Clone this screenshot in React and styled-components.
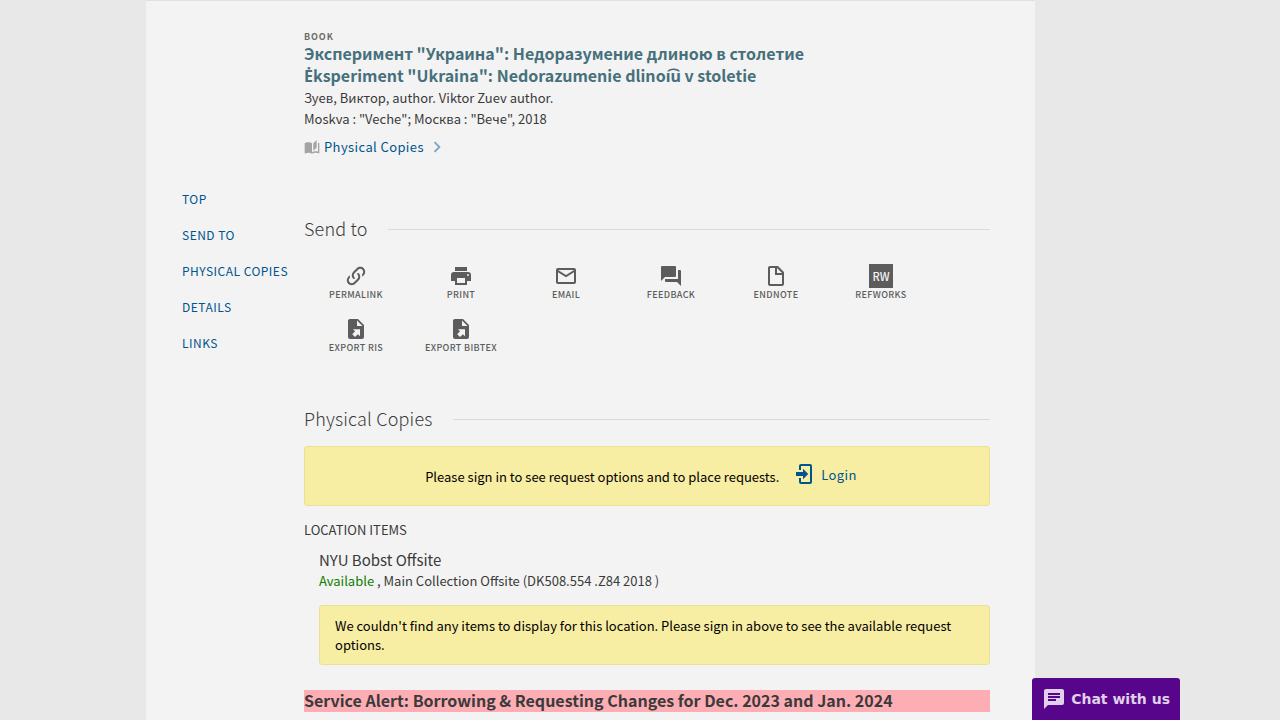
import React from "react";
import styled, { createGlobalStyle } from "styled-components";

const Global = createGlobalStyle`
  * { box-sizing: border-box; }
  body {
    margin: 0;
    background: #e8e8e8;
    color: #3a3a3a;
    font-family: "Source Sans Pro", "Noto Sans CJK SC", "Noto Sans", sans-serif;
    font-size: 13px;
    line-height: 21px;
  }
  a { color: #00558c; text-decoration: none; }
  h1, h2, h3, h4, p, ul { margin: 0; padding: 0; font-weight: 400; }
  ul { list-style: none; }
  button { font: inherit; border: 0; background: none; padding: 0; cursor: pointer; }
`;

const Page = styled.div`
  padding: 0 245px 0 146px;
  min-height: 100vh;
  display: flex;
`;

const Sheet = styled.div`
  flex: 1;
  display: flex;
  background: #f3f3f3;
  border-top: 1px solid #e0e0e0;
  padding: 31px 45px 8px 36px;
`;

const SideNav = styled.nav`
  flex: 0 0 122px;
  padding-top: 149px;
`;

const NavList = styled.ul`
  display: flex;
  flex-direction: column;
`;

const NavLink = styled.a`
  display: block;
  font-size: 12px;
  line-height: 36px;
  letter-spacing: 0.04em;
  text-transform: uppercase;
  white-space: nowrap;
`;

const Main = styled.main`
  flex: 1;
  min-width: 0;
`;

const Kind = styled.p`
  font-size: 9px;
  line-height: 10px;
  && { font-weight: 700; }
  letter-spacing: 0.1em;
  text-transform: uppercase;
  color: #6a6a6a;
`;

const Title = styled.h1`
  font-size: 16px;
  line-height: 22px;
  && { font-weight: 700; }
  margin-bottom: 1px;
  color: #46707c;
  a { color: inherit; }
`;

/* Latin letters with diacritics that the CJK family cannot compose */
const Accented = styled.span`
  font-family: "Noto Sans", sans-serif;
  line-height: 1;
`;

const Availability = styled.button`
  display: flex;
  align-items: center;
  gap: 2px;
  margin-top: 7px;
  color: #00558c;
  letter-spacing: 0.03em;
  line-height: 22px;
  svg:first-child { color: #a3a3a3; margin-right: 2px; }
  svg:last-child { color: #7ba5c0; }
`;

const SectionHead = styled.div`
  display: flex;
  align-items: center;
  gap: 20px;
  margin-top: ${(p) => p.$gap}px;
  &::after {
    content: "";
    flex: 1;
    height: 1px;
    background: #dadada;
  }
  h2 {
    padding-bottom: 2px;
    font-size: 18px;
    line-height: 26px;
    font-weight: 300;
    letter-spacing: 0.01em;
  }
`;

const Actions = styled.ul`
  display: flex;
  flex-wrap: wrap;
  margin-top: 21px;
  gap: 15px 1px;
`;

const ActionButton = styled.button`
  width: 104px;
  display: flex;
  flex-direction: column;
  align-items: center;
  color: #5c5c5c;
  font-size: 9px;
  line-height: 14px;
  font-weight: 500;
  letter-spacing: 0.04em;
  text-transform: uppercase;
  white-space: nowrap;
`;

const Tile = styled.span`
  width: 24px;
  height: 24px;
  background: #5c5c5c;
  color: #f3f3f3;
  line-height: 24px;
  text-align: center;
  font-size: 11px;
  letter-spacing: 0;
`;

const Notice = styled.div`
  background: #f7eda3;
  border: 1px solid #ece193;
  border-radius: 3px;
  color: #000;
`;

const SignIn = styled(Notice)`
  display: flex;
  align-items: center;
  justify-content: center;
  gap: 14px;
  height: 60px;
  margin-top: 13px;
  padding-right: 12px;
`;

const Login = styled.button`
  display: flex;
  align-items: center;
  gap: 4px;
  margin-bottom: 4px;
  color: #00558c;
  letter-spacing: 0.03em;
`;

const LocationLabel = styled.h3`
  margin-top: 13px;
  font-size: 13px;
`;

const Location = styled.section`
  padding-left: 15px;
  margin-top: 10px;
  h4 { font-size: 15px; line-height: 20px; }
`;

const Green = styled.span`
  color: #0f7d00;
`;

const Empty = styled(Notice)`
  margin-top: 14px;
  padding: 10px 15px;
  line-height: 19px;
`;

const ServiceAlert = styled.h2`
  margin-top: 25px;
  padding-bottom: 2px;
  background: #fdaeb4;
  font-size: 16px;
  line-height: 20px;
  && { font-weight: 700; }
`;

const Chat = styled.button`
  && {
    position: fixed;
    right: 100px;
    bottom: 0;
    display: flex;
    align-items: center;
    gap: 5px;
    height: 42px;
    padding: 0 10px;
    border-radius: 3px 3px 0 0;
    background: #57068c;
    color: #e0d0ea;
    font-family: "DejaVu Sans", sans-serif;
    font-weight: 700;
    font-size: 14px;
  }
`;

const paths = {
  link: "M10.59,13.41C11,13.8 11,14.44 10.59,14.83C10.2,15.22 9.56,15.22 9.17,14.83C7.22,12.88 7.22,9.71 9.17,7.76V7.76L12.71,4.22C14.66,2.27 17.83,2.27 19.78,4.22C21.73,6.17 21.73,9.34 19.78,11.29L18.29,12.78C18.3,11.96 18.17,11.14 17.89,10.36L18.36,9.88C19.54,8.71 19.54,6.81 18.36,5.64C17.19,4.46 15.29,4.46 14.12,5.64L10.59,9.17C9.41,10.34 9.41,12.24 10.59,13.41M13.41,9.17C13.8,8.78 14.44,8.78 14.83,9.17C16.78,11.12 16.78,14.29 14.83,16.24V16.24L11.29,19.78C9.34,21.73 6.17,21.73 4.22,19.78C2.27,17.83 2.27,14.66 4.22,12.71L5.71,11.22C5.7,12.04 5.83,12.86 6.11,13.65L5.64,14.12C4.46,15.29 4.46,17.19 5.64,18.36C6.81,19.54 8.71,19.54 9.88,18.36L13.41,14.83C14.59,13.66 14.59,11.76 13.41,10.59C13,10.2 13,9.56 13.41,9.17Z",
  print: "M18,3H6V7H18M19,12A1,1 0 0,1 18,11A1,1 0 0,1 19,10A1,1 0 0,1 20,11A1,1 0 0,1 19,12M16,19H8V14H16M19,8H5A3,3 0 0,0 2,11V17H6V21H18V17H22V11A3,3 0 0,0 19,8Z",
  mail: "M4,4H20A2,2 0 0,1 22,6V18A2,2 0 0,1 20,20H4C2.89,20 2,19.1 2,18V6C2,4.89 2.89,4 4,4M12,11L20,6H4L12,11M4,18H20V8.37L12,13.36L4,8.37V18Z",
  forum: "M17,12V3A1,1 0 0,0 16,2H3A1,1 0 0,0 2,3V17L6,13H16A1,1 0 0,0 17,12M21,6H19V15H6V17A1,1 0 0,0 7,18H18L22,22V7A1,1 0 0,0 21,6Z",
  file: "M11,4H6V20H18V11H11V4M13,4V9H18M6,2H14L20,8V20A2,2 0 0,1 18,22H6C4.89,22 4,21.1 4,20V4C4,2.89 4.89,2 6,2Z",
  exportFile: "M6,2C4.89,2 4,2.9 4,4V20A2,2 0 0,0 6,22H18A2,2 0 0,0 20,20V8L14,2M13,3.5L18.5,9H13M8.93,12.22H16V19.29L13.88,17.17L11.05,20L8.22,17.17L11.05,14.35",
  login: "M10,17.25V14H3V10H10V6.75L15.25,12L10,17.25M8,2H17A2,2 0 0,1 19,4V20A2,2 0 0,1 17,22H8A2,2 0 0,1 6,20V16H8V20H17V4H8V8H6V4A2,2 0 0,1 8,2Z",
  book: "M19,2L14,6.5V17.5L19,13V2M6.5,5C4.55,5 2.45,5.4 1,6.5V21.16C1,21.41 1.25,21.66 1.5,21.66C1.6,21.66 1.65,21.59 1.75,21.59C3.1,20.94 5.05,20.5 6.5,20.5C8.45,20.5 10.55,20.9 12,22C13.35,21.15 15.8,20.5 17.5,20.5C19.15,20.5 20.85,20.81 22.25,21.56C22.35,21.61 22.4,21.59 22.5,21.59C22.75,21.59 23,21.34 23,21.09V6.5C22.4,6.05 21.75,5.75 21,5.5V19C19.9,18.65 18.7,18.5 17.5,18.5C15.8,18.5 13.35,19.15 12,20V6.5C10.55,5.4 8.45,5 6.5,5Z",
  chevron: "M8.59,16.59L13.17,12L8.59,7.41L10,6L16,12L10,18Z",
  chat: "M20,2H4A2,2 0 0,0 2,4V22L6,18H20A2,2 0 0,0 22,16V4A2,2 0 0,0 20,2M6,6H18V8H6V6M6,9H18V11H6V9M14,14H6V12H14V14Z",
};

const Icon = ({ name, size = 24 }) => (
  <svg width={size} height={size} viewBox="0 0 24 24" fill="currentColor" fillRule="evenodd" aria-hidden="true">
    <path d={paths[name]} />
  </svg>
);

const sections = [
  ["Top", "top"],
  ["Send to", "send"],
  ["Physical Copies", "copies"],
  ["Details", "details"],
  ["Links", "links"],
];

const actions = [
  ["Permalink", "link"],
  ["Print", "print"],
  ["Email", "mail"],
  ["Feedback", "forum"],
  ["EndNote", "file"],
  ["RefWorks", null],
  ["Export RIS", "exportFile"],
  ["Export BibTeX", "exportFile"],
];

export default function App() {
  return (
    <>
      <Global />
      <Page>
        <Sheet id="top">
          <SideNav aria-label="Sections">
            <NavList>
              {sections.map(([label, id]) => (
                <li key={id}>
                  <NavLink href={"#" + id}>{label}</NavLink>
                </li>
              ))}
            </NavList>
          </SideNav>
          <Main>
            <Kind>Book</Kind>
            <Title>
              <a href="#top">
                Эксперимент "Украина": Недоразумение длиною в столетие
                <br />
                <Accented>{"\u0116"}</Accented>
                ksperiment "Ukraina": Nedorazumenie dlino
                <Accented>{"i\u0361u"}</Accented> v stoletie
              </a>
            </Title>
            <p>Зуев, Виктор, author. Viktor Zuev author.</p>
            <p>Moskva : "Veche"; Москва : "Вече", 2018</p>
            <Availability>
              <Icon name="book" size={16} />
              Physical Copies
              <Icon name="chevron" size={22} />
            </Availability>

            <SectionHead $gap={57} id="send">
              <h2>Send to</h2>
            </SectionHead>
            <Actions>
              {actions.map(([label, icon]) => (
                <li key={label}>
                  <ActionButton>
                    {icon ? <Icon name={icon} /> : <Tile aria-hidden="true">RW</Tile>}
                    {label}
                  </ActionButton>
                </li>
              ))}
            </Actions>

            <SectionHead $gap={50} id="copies">
              <h2>Physical Copies</h2>
            </SectionHead>
            <SignIn>
              <span>Please sign in to see request options and to place requests.</span>
              <Login>
                <Icon name="login" />
                Login
              </Login>
            </SignIn>
            <LocationLabel>LOCATION ITEMS</LocationLabel>
            <Location>
              <h4>NYU Bobst Offsite</h4>
              <p>
                <Green>Available</Green> , Main Collection Offsite (DK508.554 .Z84 2018 )
              </p>
              <Empty>
                We couldn't find any items to display for this location. Please sign in above to see the
                available request options.
              </Empty>
            </Location>
            <ServiceAlert>
              Service Alert: Borrowing &amp; Requesting Changes for Dec. 2023 and Jan. 2024
            </ServiceAlert>
          </Main>
        </Sheet>
      </Page>
      <Chat>
        <Icon name="chat" />
        Chat with us
      </Chat>
    </>
  );
}
